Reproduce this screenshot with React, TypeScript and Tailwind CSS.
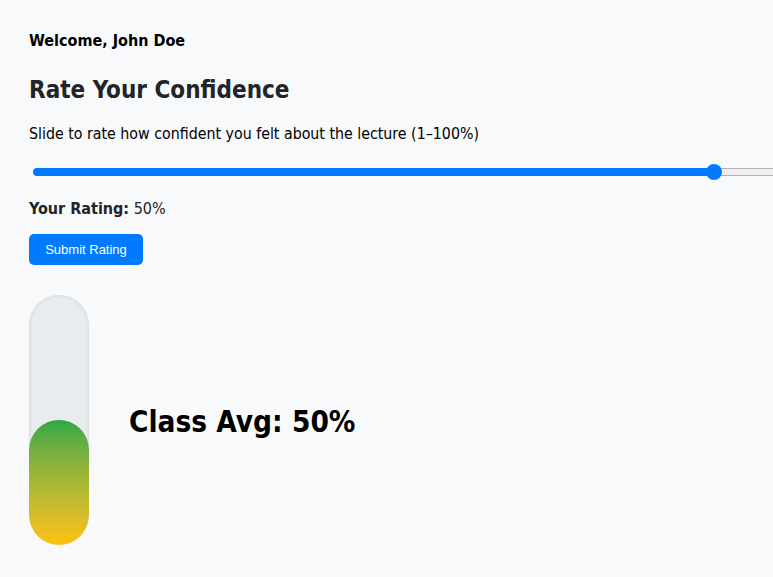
import React from "react";

export default function App() {
  const value = 50;
  return (
    <div
      className="w-full min-h-[577px] overflow-hidden bg-[#f8f9fa] text-black pt-[31px] pl-[29px]"
      style={{ fontFamily: '"DejaVu Sans Condensed", Tahoma, "DejaVu Sans", sans-serif' }}
    >
      <div className="text-[16px] leading-[19px] font-bold">Welcome, John Doe</div>
      <h2 className="mt-[26px] text-[24px] leading-[29px] font-bold text-[#212529]">
        Rate Your Confidence
      </h2>
      <p className="mt-[19px] text-[15.8px] leading-[19px]">
        Slide to rate how confident you felt about the lecture (1–100%)
      </p>
      <div className="relative mt-[21px] h-[16px] w-[1384px]">
        <div className="flex h-[16px] items-center pl-[4px]">
          <div className="h-[8px] w-[681px] rounded-l-[4px] bg-[#007bff]" />
          <div className="h-[8px] flex-1 border border-[#b2b2b2] bg-[#efefef]" />
        </div>
        <div className="absolute left-[677px] top-0 h-[16px] w-[16px] rounded-full bg-[#007bff]" />
      </div>
      <div className="mt-[19px] text-[16px] leading-[19px] text-[#212529]">
        <span className="font-bold">Your Rating:</span> {value}%
      </div>
      <button
        className="mt-[16px] flex h-[31px] w-[114px] items-center justify-center rounded-[5px] bg-[#007bff] text-[13px] text-white"
        style={{ fontFamily: '"Liberation Sans", Arial, sans-serif' }}
      >
        Submit Rating
      </button>
      <div className="mt-[30px] flex items-center gap-[40px]">
        <div className="relative flex h-[250px] w-[60px] flex-col justify-end overflow-hidden rounded-full bg-[#e9ecef] shadow-[inset_0_0_4px_rgba(0,0,0,0.12)]">
          <div className="h-[125px] w-full rounded-full bg-gradient-to-b from-[#28a745] to-[#ffc107]" />
        </div>
        <div className="pt-[3px] text-[29.5px] font-bold leading-[34px] text-black">Class Avg: 50%</div>
      </div>
    </div>
  );
}
